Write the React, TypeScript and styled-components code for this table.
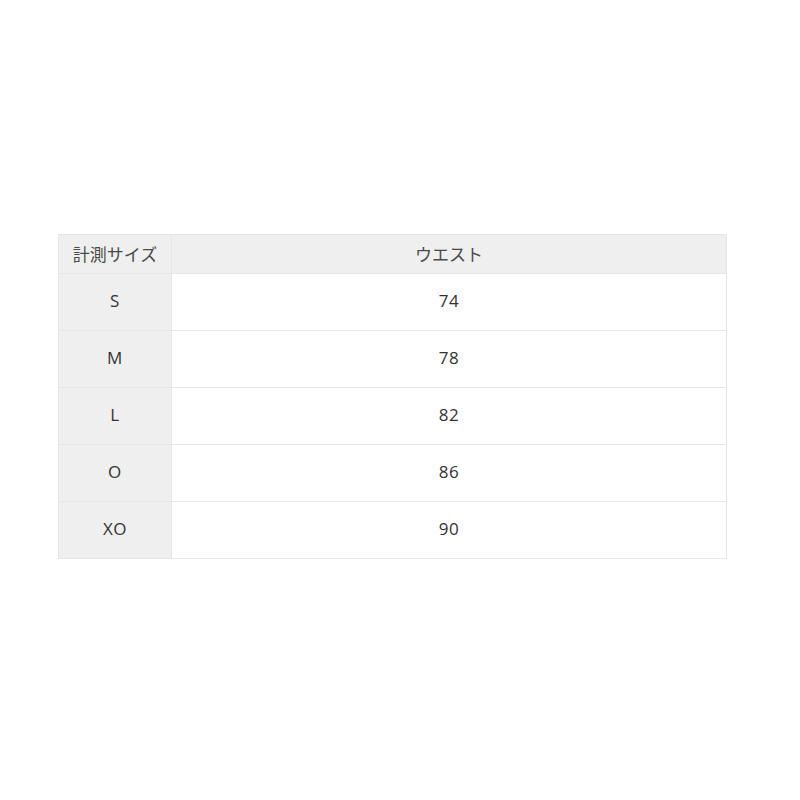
import React from "react";
import styled, { createGlobalStyle } from "styled-components";

const Global = createGlobalStyle`
  html, body { margin: 0; padding: 0; background: #fff; }
  body { font-family: "Open Sans", "Noto Sans CJK JP", sans-serif; color: #333; }
`;

const Page = styled.div`
  padding: 234px 74px 0 58px;
`;

const Table = styled.table`
  width: 669px;
  border-collapse: collapse;
  table-layout: fixed;
  font-size: 17px;
`;

const Th = styled.th<{ $first?: boolean }>`
  height: 36px;
  padding: 0 0 2px;
  background: #efefef;
  border: 1px solid #e6e6e6;
  font-weight: 400;
  text-align: center;
  width: ${(p) => (p.$first ? "112px" : "auto")};
  font-family: "Noto Sans CJK JP", sans-serif;
  font-size: 17px;
  color: #4a4a4a;
`;

const Td = styled.td<{ $label?: boolean }>`
  height: 53px;
  padding: 0 0 3px;
  border: 1px solid #e6e6e6;
  text-align: center;
  letter-spacing: 0.6px;
  background: ${(p) => (p.$label ? "#efefef" : "#fff")};
  color: #333;
`;

const rows: [string, string][] = [
  ["S", "74"],
  ["M", "78"],
  ["L", "82"],
  ["O", "86"],
  ["XO", "90"],
];

export default function App() {
  return (
    <>
      <Global />
      <Page>
        <Table>
          <thead>
            <tr>
              <Th $first>計測サイズ</Th>
              <Th>ウエスト</Th>
            </tr>
          </thead>
          <tbody>
            {rows.map(([s, v]) => (
              <tr key={s}>
                <Td $label>{s}</Td>
                <Td>{v}</Td>
              </tr>
            ))}
          </tbody>
        </Table>
      </Page>
    </>
  );
}
